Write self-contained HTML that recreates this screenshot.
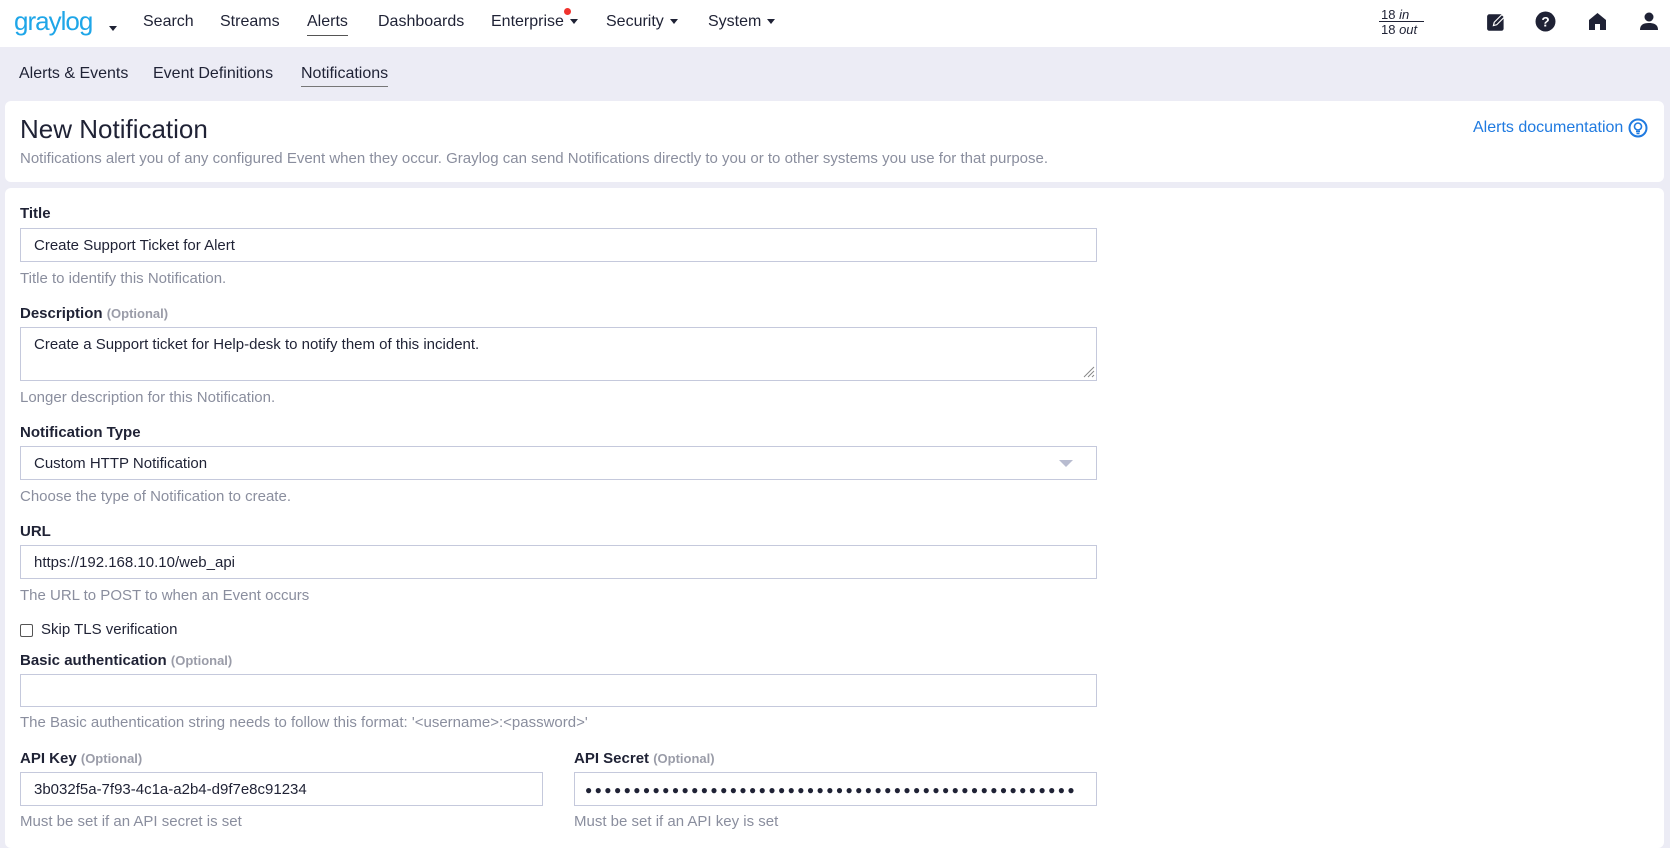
<!DOCTYPE html>
<html><head><meta charset="utf-8"><style>
*{box-sizing:border-box;margin:0;padding:0}
body{width:1670px;height:836px;overflow:hidden;background:#ececf5;font-family:"Liberation Sans",sans-serif;color:#1f2235;position:relative}
.a{position:absolute;white-space:nowrap}
.nav{position:absolute;left:0;top:0;width:1670px;height:47px;background:#fff}
.nv{font-size:16px;top:13px;color:#1f2235}
.car{display:inline-block;width:0;height:0;border-left:4px solid transparent;border-right:4px solid transparent;border-top:5px solid #1f2235;margin-left:6px;vertical-align:middle}
.card{position:absolute;background:#fff;border-radius:6px}
.lbl{font-weight:bold;font-size:15px;color:#1f2235}
.opt{font-weight:bold;font-size:13px;color:#9a9ca8}
.help{font-size:15px;color:#8a8e9e}
.inp{position:absolute;border:1px solid #c5c9dc;background:#fff;font-size:15px;padding-left:13px;line-height:34px;color:#1f2235;white-space:nowrap;overflow:hidden}
</style></head><body>
<div class="nav">
<div class="a" style="left:14px;top:6px;font-size:26px;color:#1fa6e8;letter-spacing:-1px">graylog</div>
<div class="a" style="left:109px;top:20px"><span class="car" style="margin:0"></span></div>
<div class="a nv" style="left:143px">Search</div>
<div class="a nv" style="left:220px">Streams</div>
<div class="a nv" style="left:307px">Alerts</div>
<div class="a" style="left:307px;top:35px;width:41px;height:1px;background:#555"></div>
<div class="a nv" style="left:378px">Dashboards</div>
<div class="a nv" style="left:491px">Enterprise<span class="car"></span></div>
<div class="a" style="left:564px;top:8px;width:7px;height:7px;border-radius:50%;background:#f0332e"></div>
<div class="a nv" style="left:606px">Security<span class="car"></span></div>
<div class="a nv" style="left:708px">System<span class="car"></span></div>
<div class="a" style="left:1381px;top:7px;font-size:13px;line-height:15px">18 <i>in</i></div>
<div class="a" style="left:1381px;top:22px;font-size:13px;line-height:15px">18 <i>out</i></div>
<div class="a" style="left:1379px;top:21px;width:45px;height:1px;background:#1f2235"></div>
<svg class="a" style="left:1486px;top:11px" width="22" height="22" viewBox="0 0 20 20"><rect x="1" y="3" width="15" height="15" rx="2" fill="#1f2235"/><path d="M6 14l1-4 8-8 3 3-8 8z" fill="#fff"/><path d="M7.5 12.5l.5-2 6.5-6.5 1.5 1.5-6.5 6.5z" fill="#1f2235"/></svg>
<svg class="a" style="left:1535px;top:11px" width="21" height="21" viewBox="0 0 20 20"><circle cx="10" cy="10" r="9.5" fill="#1f2235"/><text x="10" y="15" font-size="13" font-weight="bold" fill="#fff" text-anchor="middle" font-family="Liberation Sans">?</text></svg>
<svg class="a" style="left:1588px;top:12px" width="19" height="19" viewBox="0 0 19 19"><path d="M9.5 1L1 8v10h6v-6h5v6h6V8z" fill="#1f2235"/></svg>
<svg class="a" style="left:1640px;top:12px" width="18" height="19" viewBox="0 0 18 19"><circle cx="9" cy="5" r="4.5" fill="#1f2235"/><path d="M0 18c0-5 3-7 9-7s9 2 9 7z" fill="#1f2235"/></svg>
</div>
<div class="a" style="left:19px;top:65px;font-size:16px">Alerts &amp; Events</div>
<div class="a" style="left:153px;top:65px;font-size:16px">Event Definitions</div>
<div class="a" style="left:301px;top:65px;font-size:16px">Notifications</div>
<div class="a" style="left:301px;top:86px;width:87px;height:1px;background:#777"></div>

<div class="card" style="left:5px;top:101px;width:1659px;height:81px"></div>
<div class="a" style="left:20px;top:114px;font-size:26px;color:#1f2235">New Notification</div>
<div class="a" style="left:20px;top:150px;font-size:15px;color:#8a8e9e">Notifications alert you of any configured Event when they occur. Graylog can send Notifications directly to you or to other systems you use for that purpose.</div>
<div class="a" style="left:1473px;top:119px;font-size:16px;color:#1f7ae0">Alerts documentation</div>
<svg class="a" style="left:1628px;top:118px" width="20" height="20" viewBox="0 0 20 20"><circle cx="10" cy="10" r="8.5" fill="none" stroke="#1f7ae0" stroke-width="2"/><circle cx="10" cy="8.5" r="3.5" fill="none" stroke="#1f7ae0" stroke-width="1.6"/><path d="M8 13.5h4M8.5 15.5h3" stroke="#1f7ae0" stroke-width="1.4"/></svg>

<div class="card" style="left:5px;top:188px;width:1659px;height:660px"></div>
<div class="a lbl" style="left:20px;top:205px">Title</div>
<div class="inp" style="left:20px;top:228px;width:1077px;height:34px">Create Support Ticket for Alert</div>
<div class="a help" style="left:20px;top:270px">Title to identify this Notification.</div>
<div class="a lbl" style="left:20px;top:305px">Description <span class="opt">(Optional)</span></div>
<div class="inp" style="left:20px;top:327px;width:1077px;height:54px;line-height:20px;padding-top:7px">Create a Support ticket for Help-desk to notify them of this incident.</div>
<svg class="a" style="left:1082px;top:365px" width="13" height="13"><path d="M12 2L2 12M12 6L6 12M12 10L10 12" stroke="#888" stroke-width="1"/></svg>
<div class="a help" style="left:20px;top:389px">Longer description for this Notification.</div>
<div class="a lbl" style="left:20px;top:424px">Notification Type</div>
<div class="inp" style="left:20px;top:446px;width:1077px;height:34px">Custom HTTP Notification</div>
<div class="a" style="left:1059px;top:460px;border-left:7px solid transparent;border-right:7px solid transparent;border-top:7px solid #b8bcd0"></div>
<div class="a help" style="left:20px;top:488px">Choose the type of Notification to create.</div>
<div class="a lbl" style="left:20px;top:523px">URL</div>
<div class="inp" style="left:20px;top:545px;width:1077px;height:34px">https://192.168.10.10/web_api</div>
<div class="a help" style="left:20px;top:587px">The URL to POST to when an Event occurs</div>
<div class="a" style="left:20px;top:624px;width:13px;height:13px;border:1.5px solid #555;border-radius:2px"></div>
<div class="a" style="left:41px;top:621px;font-size:15px">Skip TLS verification</div>
<div class="a lbl" style="left:20px;top:652px">Basic authentication <span class="opt">(Optional)</span></div>
<div class="inp" style="left:20px;top:674px;width:1077px;height:33px"></div>
<div class="a help" style="left:20px;top:714px">The Basic authentication string needs to follow this format: '&lt;username&gt;:&lt;password&gt;'</div>
<div class="a lbl" style="left:20px;top:750px">API Key <span class="opt">(Optional)</span></div>
<div class="inp" style="left:20px;top:772px;width:523px;height:34px">3b032f5a-7f93-4c1a-a2b4-d9f7e8c91234</div>
<div class="a help" style="left:20px;top:813px">Must be set if an API secret is set</div>
<div class="a lbl" style="left:574px;top:750px">API Secret <span class="opt">(Optional)</span></div>
<div class="inp" style="left:574px;top:772px;width:523px;height:34px;padding-left:10px;font-size:12px;letter-spacing:2.4px">●●●●●●●●●●●●●●●●●●●●●●●●●●●●●●●●●●●●●●●●●●●●●●●●●●●</div>
<div class="a help" style="left:574px;top:813px">Must be set if an API key is set</div>
</body></html>
